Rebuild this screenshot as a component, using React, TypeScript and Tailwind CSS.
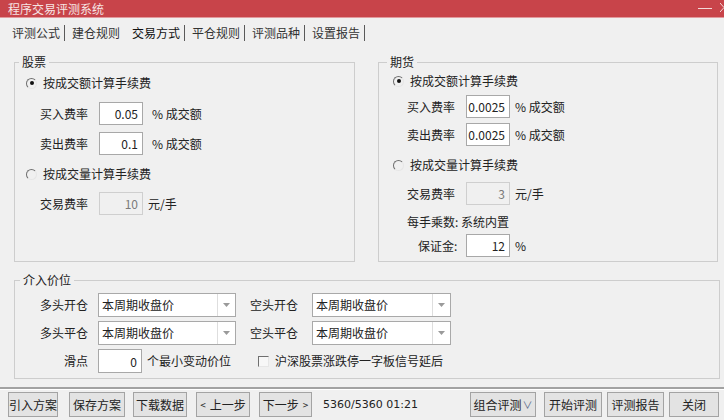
import React from 'react';

const Radio = ({ checked }: { checked?: boolean }) => (
  <span className="w-[11px] h-[11px] rounded-full border border-t-[#6f6f6f] border-l-[#6f6f6f] border-r-[#e6e6e6] border-b-[#e6e6e6] flex items-center justify-center shrink-0">
    {checked && <span className="w-[4px] h-[4px] rounded-full bg-[#111]" />}
  </span>
);

const Field = ({ value, disabled, className = '' }: { value: string; disabled?: boolean; className?: string }) => (
  <input
    readOnly
    value={value}
    className={`w-[44px] h-[23px] border text-right pr-[4px] text-[12px] outline-none ${
      disabled ? 'bg-[#f0f0f0] border-[#cfcfcf] text-[#7a7a7a]' : 'bg-white border-[#a8a8a8] text-[#222]'
    } ${className}`}
  />
);

const Combo = ({ w }: { w: string }) => (
  <div className={`flex h-[24px] border border-[#a9a9a9] bg-white ${w}`}>
    <span className="flex-1 pl-[3px] flex items-center">本周期收盘价</span>
    <span className="w-[18px] border-l border-[#dedede] flex items-center justify-center">
      <svg width="7" height="4" viewBox="0 0 7 4">
        <path d="M0 0h7L3.5 4z" fill="#9a9a9a" />
      </svg>
    </span>
  </div>
);

const Btn = ({ children, w, className = '' }: { children: React.ReactNode; w: string; className?: string }) => (
  <button className={`h-[25px] border border-[#a3a3a3] bg-[#e3e3e3] text-[12px] text-[#222] flex items-center justify-center ${w} ${className}`}>
    {children}
  </button>
);

const tabs = ['评测公式', '建仓规则', '交易方式', '平仓规则', '评测品种', '设置报告'];

export default function App() {
  return (
    <div className="w-[724px] h-[420px] overflow-hidden bg-[#f0f0f0] text-[12px] text-[#222] font-['Noto_Sans_CJK_SC',sans-serif] leading-[16px]">
      {/* title bar */}
      <div className="h-[18px] bg-[#c8444a] border-b border-[#e29a9d] flex items-center pl-[8px] text-[#f6e4e4]">
        <span>程序交易评测系统</span>
        <span className="ml-auto w-[14px] h-[1px] bg-[#f3d8d8] mr-[8px]" />
        <svg width="4" height="10" viewBox="0 0 4 10" className="mb-[2px]">
          <path d="M0 0L4 4.5M0 9L4 4.5" stroke="#f3d8d8" strokeWidth="1" fill="none" />
        </svg>
      </div>

      {/* tabs */}
      <div className="h-[30px] flex items-center pl-[12px]">
        {tabs.map((t, i) => (
          <div key={t} className="flex items-center">
            <span className={`w-[48px] ${i === 2 ? 'text-[#111]' : 'text-[#333]'}`}>{t}</span>
            <span className={`ml-[4px] mr-[7px] w-[1px] h-[16px] ${i === 1 ? 'bg-transparent' : 'bg-[#5a5a5a]'}`} />
          </div>
        ))}
      </div>

      {/* top groups */}
      <div className="flex items-stretch gap-[23px] pl-[14px] mt-[6px]">
        <fieldset className="w-[341px] border border-[#cdcdcd] pl-[11px]">
          <legend className="ml-[-7px] px-[3px] leading-[16px]">股票</legend>
          <div className="h-[20px] mt-[3px] flex items-center">
            <Radio checked />
            <span className="ml-[6px]">按成交额计算手续费</span>
          </div>
          <div className="h-[23px] mt-[9px] flex items-center pl-[14px]">
            <span className="w-[59px]">买入费率</span>
            <Field value="0.05" />
            <span className="ml-[9px]">% 成交额</span>
          </div>
          <div className="h-[23px] mt-[7px] flex items-center pl-[14px]">
            <span className="w-[59px]">卖出费率</span>
            <Field value="0.1" />
            <span className="ml-[9px]">% 成交额</span>
          </div>
          <div className="h-[20px] mt-[9px] flex items-center">
            <Radio />
            <span className="ml-[6px]">按成交量计算手续费</span>
          </div>
          <div className="h-[23px] mt-[8px] flex items-center pl-[14px]">
            <span className="w-[59px]">交易费率</span>
            <Field value="10" disabled />
            <span className="ml-[5px]">元/手</span>
          </div>
        </fieldset>

        <fieldset className="w-[340px] border border-[#cdcdcd] pl-[14px] pb-[4px]">
          <legend className="ml-[-6px] px-[3px] leading-[16px]">期货</legend>
          <div className="h-[20px] mt-[1px] flex items-center">
            <Radio checked />
            <span className="ml-[6px]">按成交额计算手续费</span>
          </div>
          <div className="h-[23px] mt-[4px] flex items-center pl-[14px]">
            <span className="w-[59px]">买入费率</span>
            <Field value="0.0025" className="pr-[2px]" />
            <span className="ml-[5px]">% 成交额</span>
          </div>
          <div className="h-[23px] mt-[5px] flex items-center pl-[14px]">
            <span className="w-[59px]">卖出费率</span>
            <Field value="0.0025" className="pr-[2px]" />
            <span className="ml-[5px]">% 成交额</span>
          </div>
          <div className="h-[20px] mt-[9px] flex items-center">
            <Radio />
            <span className="ml-[6px]">按成交量计算手续费</span>
          </div>
          <div className="h-[23px] mt-[7px] flex items-center pl-[14px]">
            <span className="w-[59px]">交易费率</span>
            <Field value="3" disabled />
            <span className="ml-[5px]">元/手</span>
          </div>
          <div className="h-[16px] mt-[9px] flex items-center pl-[14px]">每手乘数: 系统内置</div>
          <div className="h-[23px] mt-[4px] flex items-center pl-[25px]">
            <span className="w-[48px]">保证金:</span>
            <Field value="12" />
            <span className="ml-[5px]">%</span>
          </div>
        </fieldset>
      </div>

      {/* entry price group */}
      <fieldset className="ml-[14px] mt-[10px] w-[706px] border border-[#cdcdcd] pb-[5px]">
        <legend className="ml-[5px] px-[3px] leading-[16px]">介入价位</legend>
        <div className="h-[24px] mt-[5px] flex items-center">
          <span className="w-[73px] text-right mr-[10px]">多头开仓</span>
          <Combo w="w-[138px]" />
          <span className="ml-[14px] w-[48px] mr-[14px]">空头开仓</span>
          <Combo w="w-[139px]" />
        </div>
        <div className="h-[24px] mt-[4px] flex items-center">
          <span className="w-[73px] text-right mr-[10px]">多头平仓</span>
          <Combo w="w-[138px]" />
          <span className="ml-[14px] w-[48px] mr-[14px]">空头平仓</span>
          <Combo w="w-[139px]" />
        </div>
        <div className="h-[24px] mt-[4px] flex items-center">
          <span className="w-[73px] text-right mr-[10px]">滑点</span>
          <Field value="0" className="h-[24px]" />
          <span className="ml-[5px]">个最小变动价位</span>
          <span className="ml-[27px] w-[11px] h-[11px] border border-t-[#6f6f6f] border-l-[#6f6f6f] border-r-[#e6e6e6] border-b-[#e6e6e6] bg-[#f7f7f7]" />
          <span className="ml-[6px]">沪深股票涨跌停一字板信号延后</span>
        </div>
      </fieldset>

      {/* separator */}
      <div className="mt-[8px] h-[2px] bg-[#a2a2a2] border-b border-white box-content" />

      {/* bottom buttons */}
      <div className="mt-[2px] flex items-center pl-[8px]">
        <Btn w="w-[50px]">引入方案</Btn>
        <Btn w="w-[56px]" className="ml-[11px]">保存方案</Btn>
        <Btn w="w-[54px]" className="ml-[8px]">下载数据</Btn>
        <Btn w="w-[54px]" className="ml-[9px]">
          <span className="text-[10px] mr-[4px]">&lt;</span>上一步
        </Btn>
        <Btn w="w-[53px]" className="ml-[9px]">
          下一步<span className="text-[10px] ml-[4px]">&gt;</span>
        </Btn>
        <span className="ml-[11px] text-[11px] text-[#222] font-['DejaVu_Sans',sans-serif]">5360/5360 01:21</span>
        <Btn w="w-[66px]" className="ml-auto">
          组合评测<span className="text-[10px] text-[#5a6a8a] ml-[1px]">∨</span>
        </Btn>
        <Btn w="w-[58px]" className="ml-[8px]">开始评测</Btn>
        <Btn w="w-[57px]" className="ml-[5px]">评测报告</Btn>
        <Btn w="w-[50px]" className="ml-[5px] mr-[5px]">关闭</Btn>
      </div>
    </div>
  );
}
